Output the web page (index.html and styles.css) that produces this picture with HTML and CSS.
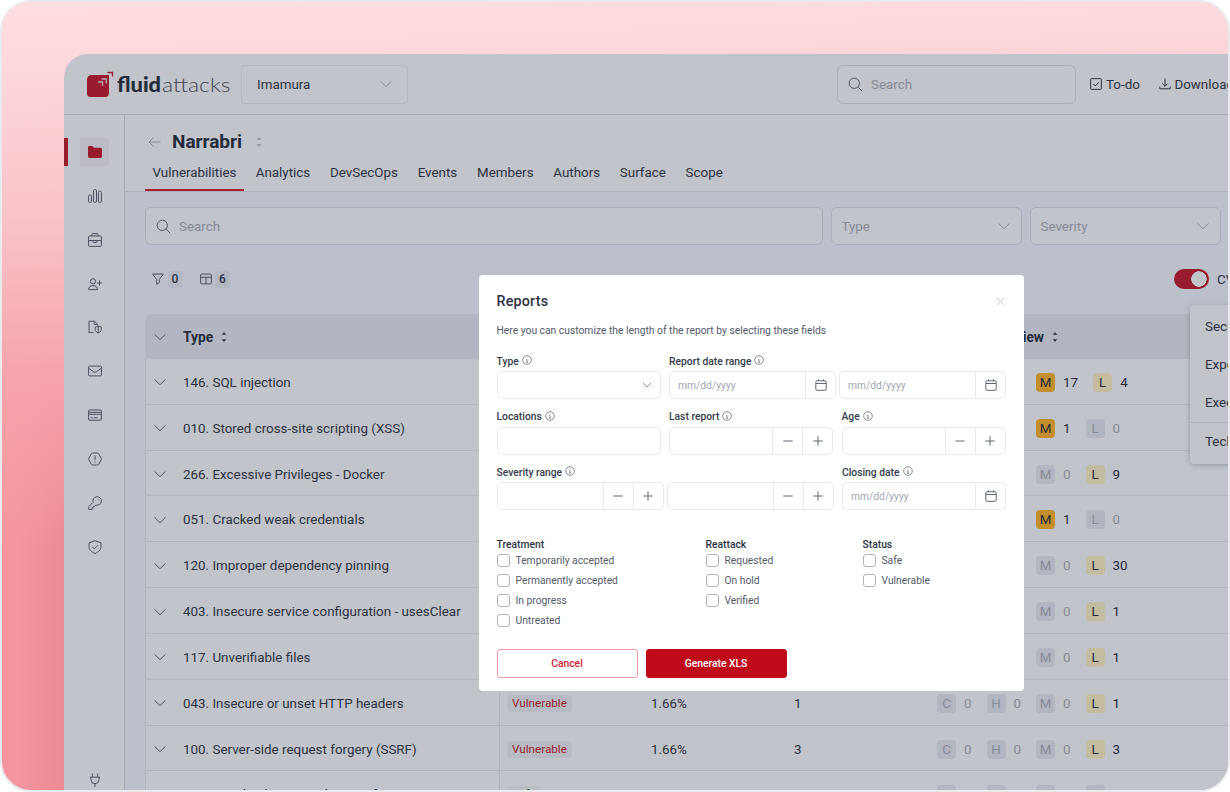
FILE: index.html
```html
<!DOCTYPE html>
<html lang="en">

<head>
    <meta charset="UTF-8">
    <meta name="viewport" content="width=device-width, initial-scale=1.0">
    <title>Fluid Attacks - Reports</title>
    <link rel="stylesheet" href="styles.css">
</head>

<body>
    <svg width="0" height="0" class="sprite">
        <symbol id="chevron" viewBox="0 0 14 14"><path d="M1.5 4.3 7 9.7l5.500-5.400" /></symbol>
        <symbol id="search" viewBox="0 0 16 16"><circle cx="6.700" cy="6.700" r="5.500" /><path d="m10.700 10.700 4.300 4.300" /></symbol>
        <symbol id="sort" viewBox="0 0 8 12"><path class="fill" d="M1.700 3.700 4 1.200 6.300 3.700zM1.700 8.300 4 10.800 6.300 8.300z" /></symbol>
        <symbol id="info" viewBox="0 0 10 10"><circle cx="5" cy="5" r="4.300" /><path d="M4.200 4.500H5v2.700M4 7.200h2M4.700 2.900h.7" /></symbol>
        <symbol id="calendar" viewBox="0 0 12 12"><rect x=".8" y="1.800" width="10.400" height="9.500" rx="1.300" /><path d="M1 4.500h10M3.500.3v1.700M8.500.3v1.700" /></symbol>
        <symbol id="minus" viewBox="0 0 12 12"><path d="M1.300 6h9.400" /></symbol>
        <symbol id="plus" viewBox="0 0 12 12"><path d="M1.300 6h9.400M6 1.300v9.400" /></symbol>
    </svg>

    <div class="frame">
        <div class="app">
            <header class="topbar">
                <svg class="logo" width="146" height="32" viewBox="0 0 146 32">
                    <path class="logo-mark" d="M4.500 8H22v18a4 4 0 0 1-4 4H3.500A3.500 3.500 0 0 1 0 26.500v-14A4.500 4.500 0 0 1 4.500 8z" />
                    <path class="logo-line" d="M11 15h4.500v4M14.500 12h4.800v4.500" />
                    <path class="logo-tip" d="M20.500 5.500h5v4" />
                    <text class="logo-bold" x="30" y="25" textLength="44" lengthAdjust="spacingAndGlyphs">fluid</text>
                    <text class="logo-light" x="75" y="25" textLength="68.500" lengthAdjust="spacingAndGlyphs">attacks</text>
                </svg>
                <div class="select org">Imamura<svg width="14" height="14"><use href="#chevron" /></svg></div>
                <div class="search top-search"><svg width="15" height="15"><use href="#search" /></svg>Search</div>
                <a class="top-link todo"><svg width="12" height="12" viewBox="0 0 12 12"><rect x=".6" y=".6" width="10.800" height="10.800" rx="1" /><path d="m3.300 6 2 2 3.500-3.700" /></svg>To-do</a>
                <a class="top-link download"><svg width="12" height="12" viewBox="0 0 12 12"><path d="M6 .5v7.800M3.300 5.500 6 8.200l2.700-2.700M.8 8.500v2.300h10.400V8.500" /></svg>Downloads</a>
            </header>

            <div class="body">
                <nav class="sidebar">
                    <a class="side-item active"><svg width="14" height="14" viewBox="0 0 14 14"><path class="fill" d="M0 2.300A1.300 1.300 0 0 1 1.300 1H4.500L6 2.800h6.500A1.500 1.500 0 0 1 14 4.300v7.200A1.500 1.500 0 0 1 12.500 13h-11A1.500 1.500 0 0 1 0 11.500z" /></svg></a>
                    <a class="side-item"><svg width="14" height="14" viewBox="0 0 14 14"><rect x=".6" y="6" width="3" height="7.400" rx="1.200" /><rect x="5.500" y=".6" width="3" height="12.800" rx="1.200" /><rect x="10.400" y="2.300" width="3" height="11.100" rx="1.200" /></svg></a>
                    <a class="side-item"><svg width="14" height="14" viewBox="0 0 14 14"><rect x=".6" y="3" width="12.800" height="10.400" rx="1" /><path d="M4 3V1.500q0-.9.9-.9h4.200q.9 0 .9.900V3M.6 7.500h12.800M5 7.500v1.300q0 .7.700.7h2.600q.7 0 .7-.7V7.500" /></svg></a>
                    <a class="side-item"><svg width="14" height="14" viewBox="0 0 14 14"><circle cx="5" cy="4.300" r="2.600" /><path d="M.6 12.600c.3-3 1.700-4 4.400-4s4.100 1 4.400 4zM11.500 3.500v5M9 6h5" /></svg></a>
                    <a class="side-item"><svg width="14" height="14" viewBox="0 0 14 14"><path d="M5.500 12.600H1V1.200h5.500l3 3v1.200M6.200 1.400v3h3M10.300 6l3.100 1.200v2.200c0 1.700-1.200 2.700-3.100 3.600-1.900-.9-3.100-1.900-3.100-3.600V7.200zM10.300 6v7" /></svg></a>
                    <a class="side-item"><svg width="14" height="14" viewBox="0 0 14 14"><rect x=".6" y="2.100" width="12.800" height="9.800" rx="1" /><path d="m1 4.500 4.600 3.300q1.400 1 2.800 0L13 4.500" /></svg></a>
                    <a class="side-item"><svg width="14" height="14" viewBox="0 0 14 14"><rect x=".6" y="2" width="12.800" height="10.200" rx="1" /><path d="M.6 4.300h12.800M.6 6.300h12.800M2.700 9.700h2M6 9.700h3.500" /></svg></a>
                    <a class="side-item"><svg width="14" height="14" viewBox="0 0 14 14"><path d="M4.500 1h5q.8 0 1.200.7L13.200 6.300q.4.700 0 1.400l-2.500 4.600q-.4.700-1.200.7h-5q-.8 0-1.200-.7L.8 7.700q-.4-.7 0-1.400l2.500-4.600Q3.700 1 4.500 1zM7 3.500v4.700M7 9.500v1" /></svg></a>
                    <a class="side-item"><svg width="14" height="14" viewBox="0 0 14 14"><path d="M5.200 6.200A4.200 4.200 0 1 1 8.200 9L7 10.200H5.600v1.500H4.200v1.700H.7v-2.700zM10 3.800h.5" /></svg></a>
                    <a class="side-item"><svg width="14" height="14" viewBox="0 0 14 14"><path d="M7 .7 13 2.900v3.600c0 3.300-2.200 5.300-6 7-3.800-1.700-6-3.700-6-7V2.900zM4.400 6.800l2 2 3.500-3.500" /></svg></a>
                    <a class="side-item bottom"><svg width="14" height="14" viewBox="0 0 14 14"><path d="M4.300.5v3.300M9.700.5v3.300M2 4.200h10M3 4.200v2.500a4 4 0 0 0 8 0V4.200M7 10.700v3.300" /></svg></a>
                </nav>

                <main class="main">
                    <div class="group-header">
                        <div class="group-title">
                            <svg width="13" height="12" viewBox="0 0 13 12"><path d="M12.500 6H1M5.500 1.500 1 6l4.500 4.500" /></svg>
                            <h1>Narrabri</h1>
                            <svg width="8" height="12"><use href="#sort" /></svg>
                        </div>
                        <div class="tabs">
                            <a class="tab active">Vulnerabilities</a>
                            <a class="tab">Analytics</a>
                            <a class="tab">DevSecOps</a>
                            <a class="tab">Events</a>
                            <a class="tab">Members</a>
                            <a class="tab">Authors</a>
                            <a class="tab">Surface</a>
                            <a class="tab">Scope</a>
                        </div>
                    </div>

                    <div class="filters">
                        <div class="search"><svg width="15" height="15"><use href="#search" /></svg>Search</div>
                        <div class="select">Type<svg width="14" height="14"><use href="#chevron" /></svg></div>
                        <div class="select">Severity<svg width="14" height="14"><use href="#chevron" /></svg></div>
                    </div>

                    <div class="toolbar">
                        <svg width="12" height="12" viewBox="0 0 12 12"><path d="M.6 1h10.800L7.400 6.300v3.400l-2.800 1.600v-5z" /></svg>
                        <span class="count">0</span>
                        <svg class="columns" width="12" height="12" viewBox="0 0 12 12"><rect x=".6" y="1.100" width="10.800" height="9.800" rx="1" /><path d="M.6 4.300h10.800M6 4.300v6.600" /></svg>
                        <span class="count">6</span>
                        <span class="toggle"></span>
                        <span class="cvss">CVSS 4.0</span>
                    </div>

                    <div class="table">
                        <div class="row head">
                            <div class="cell first"><svg width="14" height="14"><use href="#chevron" /></svg>Type<svg class="sort" width="8" height="12"><use href="#sort" /></svg></div>
                            <div class="cell">Status</div>
                            <div class="cell">Risk</div>
                            <div class="cell">Open</div>
                            <div class="cell"><span class="overview">Risk Overview</span><svg class="sort" width="8" height="12"><use href="#sort" /></svg></div>
                        </div>
                        <div class="row">
                            <div class="cell first"><svg width="14" height="14"><use href="#chevron" /></svg>146. SQL injection</div>
                            <div class="cell"><span class="tag">Vulnerable</span></div>
                            <div class="cell">1.66%</div>
                            <div class="cell">21</div>
                            <div class="cell levels"><span class="level">C</span><i>0</i><span class="level">H</span><i>0</i><span class="level m">M</span><b>17</b><span class="level l">L</span><b>4</b></div>
                        </div>
                        <div class="row">
                            <div class="cell first"><svg width="14" height="14"><use href="#chevron" /></svg>010. Stored cross-site scripting (XSS)</div>
                            <div class="cell"><span class="tag">Vulnerable</span></div>
                            <div class="cell">1.66%</div>
                            <div class="cell">1</div>
                            <div class="cell levels"><span class="level">C</span><i>0</i><span class="level">H</span><i>0</i><span class="level m">M</span><b>1</b><span class="level">L</span><i>0</i></div>
                        </div>
                        <div class="row">
                            <div class="cell first"><svg width="14" height="14"><use href="#chevron" /></svg>266. Excessive Privileges - Docker</div>
                            <div class="cell"><span class="tag">Vulnerable</span></div>
                            <div class="cell">1.66%</div>
                            <div class="cell">9</div>
                            <div class="cell levels"><span class="level">C</span><i>0</i><span class="level">H</span><i>0</i><span class="level">M</span><i>0</i><span class="level l">L</span><b>9</b></div>
                        </div>
                        <div class="row">
                            <div class="cell first"><svg width="14" height="14"><use href="#chevron" /></svg>051. Cracked weak credentials</div>
                            <div class="cell"><span class="tag">Vulnerable</span></div>
                            <div class="cell">1.66%</div>
                            <div class="cell">1</div>
                            <div class="cell levels"><span class="level">C</span><i>0</i><span class="level">H</span><i>0</i><span class="level m">M</span><b>1</b><span class="level">L</span><i>0</i></div>
                        </div>
                        <div class="row">
                            <div class="cell first"><svg width="14" height="14"><use href="#chevron" /></svg>120. Improper dependency pinning</div>
                            <div class="cell"><span class="tag">Vulnerable</span></div>
                            <div class="cell">1.66%</div>
                            <div class="cell">30</div>
                            <div class="cell levels"><span class="level">C</span><i>0</i><span class="level">H</span><i>0</i><span class="level">M</span><i>0</i><span class="level l">L</span><b>30</b></div>
                        </div>
                        <div class="row">
                            <div class="cell first"><svg width="14" height="14"><use href="#chevron" /></svg>403. Insecure service configuration - usesClear</div>
                            <div class="cell"><span class="tag">Vulnerable</span></div>
                            <div class="cell">1.66%</div>
                            <div class="cell">1</div>
                            <div class="cell levels"><span class="level">C</span><i>0</i><span class="level">H</span><i>0</i><span class="level">M</span><i>0</i><span class="level l">L</span><b>1</b></div>
                        </div>
                        <div class="row">
                            <div class="cell first"><svg width="14" height="14"><use href="#chevron" /></svg>117. Unverifiable files</div>
                            <div class="cell"><span class="tag">Vulnerable</span></div>
                            <div class="cell">1.66%</div>
                            <div class="cell">1</div>
                            <div class="cell levels"><span class="level">C</span><i>0</i><span class="level">H</span><i>0</i><span class="level">M</span><i>0</i><span class="level l">L</span><b>1</b></div>
                        </div>
                        <div class="row">
                            <div class="cell first"><svg width="14" height="14"><use href="#chevron" /></svg>043. Insecure or unset HTTP headers</div>
                            <div class="cell"><span class="tag">Vulnerable</span></div>
                            <div class="cell">1.66%</div>
                            <div class="cell">1</div>
                            <div class="cell levels"><span class="level">C</span><i>0</i><span class="level">H</span><i>0</i><span class="level">M</span><i>0</i><span class="level l">L</span><b>1</b></div>
                        </div>
                        <div class="row">
                            <div class="cell first"><svg width="14" height="14"><use href="#chevron" /></svg>100. Server-side request forgery (SSRF)</div>
                            <div class="cell"><span class="tag">Vulnerable</span></div>
                            <div class="cell">1.66%</div>
                            <div class="cell">3</div>
                            <div class="cell levels"><span class="level">C</span><i>0</i><span class="level">H</span><i>0</i><span class="level">M</span><i>0</i><span class="level l">L</span><b>3</b></div>
                        </div>
                        <div class="row">
                            <div class="cell first"><svg width="14" height="14"><use href="#chevron" /></svg>331. Supply Chain Attack - Terraform</div>
                            <div class="cell"><span class="tag safe">Safe</span></div>
                            <div class="cell">0.0%</div>
                            <div class="cell">0</div>
                            <div class="cell levels"><span class="level">C</span><i>0</i><span class="level">H</span><i>0</i><span class="level">M</span><i>0</i><span class="level">L</span><i>0</i></div>
                        </div>
                    </div>
                </main>
            </div>
        </div>

        <div class="menu">
            <a>Security Tests</a>
            <a>Export</a>
            <a>Executive</a>
            <a class="last">Technical</a>
        </div>

        <div class="modal">
            <div class="modal-head">
                <h2>Reports</h2>
                <svg width="9" height="9" viewBox="0 0 9 9"><path d="m1 1 7 7M8 1 1 8" /></svg>
            </div>
            <p>Here you can customize the length of the report by selecting these fields</p>

            <div class="form-row">
                <div class="field">
                    <label>Type <svg width="10" height="10"><use href="#info" /></svg></label>
                    <div class="input"><span></span><svg class="caret" width="10" height="10"><use href="#chevron" /></svg></div>
                </div>
                <div class="field">
                    <label>Report date range <svg width="10" height="10"><use href="#info" /></svg></label>
                    <div class="pair">
                        <div class="input wide"><span>mm/dd/yyyy</span><button><svg width="12" height="12"><use href="#calendar" /></svg></button></div>
                        <div class="input wide"><span>mm/dd/yyyy</span><button><svg width="12" height="12"><use href="#calendar" /></svg></button></div>
                    </div>
                </div>
            </div>
            <div class="form-row">
                <div class="field">
                    <label>Locations <svg width="10" height="10"><use href="#info" /></svg></label>
                    <div class="input"></div>
                </div>
                <div class="field">
                    <label>Last report <svg width="10" height="10"><use href="#info" /></svg></label>
                    <div class="input"><span></span><button><svg width="12" height="12"><use href="#minus" /></svg></button><button><svg width="12" height="12"><use href="#plus" /></svg></button></div>
                </div>
                <div class="field">
                    <label>Age <svg width="10" height="10"><use href="#info" /></svg></label>
                    <div class="input"><span></span><button><svg width="12" height="12"><use href="#minus" /></svg></button><button><svg width="12" height="12"><use href="#plus" /></svg></button></div>
                </div>
            </div>
            <div class="form-row">
                <div class="field">
                    <label>Severity range <svg width="10" height="10"><use href="#info" /></svg></label>
                    <div class="pair">
                        <div class="input wide"><span></span><button><svg width="12" height="12"><use href="#minus" /></svg></button><button><svg width="12" height="12"><use href="#plus" /></svg></button></div>
                        <div class="input wide"><span></span><button><svg width="12" height="12"><use href="#minus" /></svg></button><button><svg width="12" height="12"><use href="#plus" /></svg></button></div>
                    </div>
                </div>
                <div class="field">
                    <label>Closing date <svg width="10" height="10"><use href="#info" /></svg></label>
                    <div class="input"><span>mm/dd/yyyy</span><button><svg width="12" height="12"><use href="#calendar" /></svg></button></div>
                </div>
            </div>

            <div class="checks">
                <div class="check-group">
                    <h3>Treatment</h3>
                    <div class="check"><i></i>Temporarily accepted</div>
                    <div class="check"><i></i>Permanently accepted</div>
                    <div class="check"><i></i>In progress</div>
                    <div class="check"><i></i>Untreated</div>
                </div>
                <div class="check-group">
                    <h3>Reattack</h3>
                    <div class="check"><i></i>Requested</div>
                    <div class="check"><i></i>On hold</div>
                    <div class="check"><i></i>Verified</div>
                </div>
                <div class="check-group">
                    <h3>Status</h3>
                    <div class="check"><i></i>Safe</div>
                    <div class="check"><i></i>Vulnerable</div>
                </div>
            </div>

            <div class="buttons">
                <button class="btn">Cancel</button>
                <button class="btn primary">Generate XLS</button>
            </div>
        </div>
    </div>
</body>

</html>
```

FILE: styles.css
```css
* {
    box-sizing: border-box;
}

body {
    margin: 0;
    background: #fff;
    font-family: Roboto, "Liberation Sans", sans-serif;
    font-size: 13.400px;
    color: #2b3242;
    white-space: nowrap;
}

svg {
    flex-shrink: 0;
    fill: none;
    stroke: currentColor;
    stroke-width: 1;
}

.fill {
    fill: currentColor;
    stroke: none;
}

.sprite {
    position: absolute;
}

.frame {
    position: relative;
    width: 1230px;
    height: 792px;
    padding: 52px 0 0 62px;
    overflow: hidden;
    border: 2px solid #e9eaee;
    border-radius: 31px;
    background:
        linear-gradient(178deg, #ffdee1 0, #fdd7db 8%, #f9c3c9 26%, #f7a5ad 44%, rgba(245, 147, 157, 0) 66%),
        linear-gradient(90deg, #f6959e 15px, #ed8a94 62px);
}

.app {
    height: 738px;
    overflow: hidden;
    border-radius: 24px 0 0 0;
    background: #c1c4ca;
}

/* top bar */
.topbar {
    display: flex;
    align-items: center;
    height: 61px;
    padding-left: 23px;
    border-bottom: 1px solid #a5a9b3;
}

.topbar > * {
    flex-shrink: 0;
}

.logo {
    margin-right: 8px;
    margin-top: -3px;
    stroke: none;
}

.logo-mark {
    fill: #981c2d;
}

.logo-line {
    fill: none;
    stroke: #c1a5ad;
    stroke-width: 1.3;
}

.logo-tip {
    fill: none;
    stroke: #981c2d;
    stroke-width: 1.3;
}

.logo-bold,
.logo-light {
    font-family: Lato, sans-serif;
    font-size: 20px;
    font-weight: 900;
    fill: #242c3c;
}

.logo-light {
    font-weight: 300;
    fill: #3c4352;
}

.select,
.search {
    display: flex;
    align-items: center;
    height: 38px;
    border: 1px solid #a9adb9;
    border-radius: 6px;
    background: #c1c4ca;
    color: #858a96;
}

.select {
    justify-content: space-between;
    width: 191px;
    padding: 0 10px 0 10px;
}

.search {
    gap: 8px;
    padding-left: 10px;
}

.search svg {
    color: #4a5060;
}

.org {
    width: 167px;
    height: 39px;
    padding: 0 14px 0 15px;
    border-color: #b4b8c0;
    border-radius: 4px;
    color: #2b3242;
}

.org svg {
    color: #858a96;
}

.top-search {
    width: 239px;
    height: 39px;
    margin: 0 14px 0 429px;
}

.top-link {
    display: flex;
    align-items: center;
    gap: 4px;
    margin-right: 19px;
}

.top-link.download {
    gap: 3.500px;
}

.body {
    display: flex;
    height: 679px;
}

/* sidebar */
.sidebar {
    display: flex;
    flex-direction: column;
    gap: 15.850px;
    width: 61px;
    padding: 23px 0 0;
    border-right: 1px solid #a5a9b3;
    color: #4a5060;
}

.side-item {
    display: flex;
    flex-shrink: 0;
    align-items: center;
    justify-content: center;
    height: 28px;
    padding-left: 1px;
}

.side-item.active {
    width: 45px;
    padding-left: 12px;
    border-left: 4px solid #981c2d;
    border-radius: 0 4px 4px 0;
    background: linear-gradient(#babbc5, #babbc5) right / 29px 100% no-repeat;
    color: #981c2d;
}

.side-item.bottom {
    margin-top: auto;
}

/* main */
.main {
    flex: 1;
    min-width: 0;
    background: #bcc0cb;
}

.group-header {
    height: 77px;
    padding: 15px 0 0 20px;
    border-bottom: 1px solid #adb1bb;
    background: #c1c4ca;
}

.group-title {
    display: flex;
    align-items: center;
    height: 24px;
    padding-left: 3px;
    color: #858a96;
}

.group-title h1 {
    margin: 0 13px 0 11px;
    font-size: 19px;
    font-weight: 700;
    line-height: 22px;
    color: #242c3c;
}

.tabs {
    display: flex;
    gap: 3.700px;
    margin-top: 6px;
}

.tab {
    height: 31px;
    padding: 4px 8px 0;
    line-height: 18px;
}

.tab.active {
    width: 99px;
    padding: 4px 0 0 7.500px;
    border-bottom: 2px solid #a32334;
}

.filters {
    display: flex;
    gap: 8px;
    padding: 15px 7.500px 0 20px;
}

.filters .search {
    flex: 1;
}

.toolbar {
    display: flex;
    align-items: center;
    width: 1147px;
    height: 69px;
    padding: 0 0 1px 27px;
}

.toolbar svg {
    color: #4a5060;
}

.toolbar .columns {
    margin-left: 17px;
}

.count {
    width: 15px;
    margin-left: 3.500px;
    border-radius: 4px;
    background: #b4b8c2;
    font-size: 12px;
    font-weight: 500;
    line-height: 17px;
    text-align: center;
}

.toggle {
    width: 35px;
    height: 20px;
    margin: 0 8px 0 auto;
    border: 2px solid #981c2d;
    border-radius: 10px;
    background: radial-gradient(circle at 23px 8px, #c1c4ca 7.500px, #981c2d 8px);
}

.cvss {
    width: 55px;
}

/* vulnerabilities table */
.table {
    width: 1100px;
    margin-left: 20px;
}

.row {
    display: grid;
    grid-template-columns: 355px 144px 143px 143px 1fr;
    height: 45.830px;
    border-bottom: 1px solid #b0b4bd;
    background: #c1c4ca;
}

.row.head {
    height: 45px;
    border: 0;
    border-radius: 8px 8px 0 0;
    background: #b2b6c1;
    font-size: 13.800px;
    font-weight: 700;
    color: #242c3c;
}

.cell {
    display: flex;
    align-items: center;
    padding: 2px 0 0 7px;
}

.head .cell {
    padding-top: 0;
}

.cell.first {
    padding-left: 7px;
    border-left: 1px solid #b0b4bd;
    border-right: 1px solid #b0b4bd;
}

.head .cell.first {
    border-color: transparent;
}

.cell.first svg:first-child {
    margin-right: 16px;
    color: #4a5060;
}

.sort {
    margin-left: 7px;
}

.overview {
    display: flex;
    justify-content: flex-end;
    width: 107px;
}

.tag {
    padding: 0 5px;
    border-radius: 4px;
    background: #b9bbc4;
    font-size: 11.700px;
    line-height: 17px;
    color: #981c2d;
}

.tag.safe {
    background: #b9bdc4;
    color: #2b5a48;
}

.level {
    width: 19px;
    height: 19px;
    border-radius: 4px;
    background: #b2b6c1;
    line-height: 19px;
    text-align: center;
    color: #858a96;
}

.level.m {
    background: #c38f2d;
    color: #242c3c;
}

.level.l {
    background: #c3bca0;
    color: #242c3c;
}

.levels i,
.levels b {
    margin: 0 15px 0 8px;
    font-style: normal;
    font-weight: 400;
    color: #858a96;
}

.levels b {
    color: #242c3c;
}

/* report menu */
.menu {
    position: absolute;
    top: 303px;
    left: 1188px;
    width: 180px;
    border-radius: 4px;
    background: #c1c4ca;
    box-shadow: 0 1px 5px rgba(80, 86, 110, .45);
}

.menu a {
    display: block;
    padding-left: 15px;
    line-height: 38px;
}

.menu a:first-child {
    padding-top: 3px;
}

.menu .last {
    padding-bottom: 3px;
    border-top: 1px solid #adb1bb;
}

/* reports modal */
.modal {
    position: absolute;
    top: 273px;
    left: 477px;
    width: 545px;
    height: 416px;
    padding: 16px 17.500px 0;
    border-radius: 4px;
    background: #fff;
    font-size: 10.300px;
    color: #535a69;
}

.modal-head {
    display: flex;
    align-items: center;
    justify-content: space-between;
    height: 20px;
    padding-right: 1px;
}

.modal-head svg {
    margin-right: 1px;
    color: #c9ccd3;
}

.modal h2 {
    margin: 0;
    font-size: 14.300px;
    font-weight: 500;
    letter-spacing: .2px;
    color: #2b3242;
}

.modal p {
    margin: 13px 0 16px;
    line-height: 14px;
}

.form-row {
    display: flex;
    gap: 8.500px;
    height: 55.600px;
}

.field label {
    display: flex;
    align-items: center;
    gap: 3px;
    height: 14px;
    margin-bottom: 3px;
    font-weight: 500;
    color: #353c4b;
}

.field label svg {
    margin-bottom: 2px;
    color: #6b7180;
    stroke-width: .8;
}

.pair {
    display: flex;
    gap: 3px;
}

.input {
    display: flex;
    align-items: center;
    width: 164px;
    height: 28px;
    border: 1px solid #e8eaed;
    border-radius: 5px;
    color: #a3a8b3;
}

.input.wide {
    width: 167px;
}

.input span {
    flex: 1;
    padding-left: 8px;
}

.input button {
    display: flex;
    align-items: center;
    justify-content: center;
    width: 30px;
    height: 26px;
    padding: 0;
    border: 0;
    border-left: 1px solid #e8eaed;
    background: none;
    color: #5f6675;
}

.input .caret {
    margin-right: 8px;
    color: #8d93a0;
    stroke-width: 1.400;
}

.checks {
    display: flex;
    height: 110px;
    margin-top: 18px;
}

.check-group:nth-child(1) {
    width: 209px;
}

.check-group:nth-child(2) {
    width: 157px;
}

.checks h3 {
    margin: 0 0 -.800px;
    font-size: 10.300px;
    font-weight: 500;
    line-height: 12px;
    color: #2b3242;
}

.check {
    display: flex;
    align-items: center;
    gap: 6px;
    height: 20.200px;
}

.check i {
    width: 13px;
    height: 13px;
    border: 1px solid #aeb3be;
    border-radius: 3px;
}

.buttons {
    display: flex;
    gap: 8px;
}

.btn {
    width: 141px;
    height: 29px;
    border: 1px solid #f59aa3;
    border-radius: 3px;
    background: #fff;
    font-family: inherit;
    font-size: 10.300px;
    font-weight: 500;
    color: #cf2233;
}

.btn.primary {
    border-color: #bf0b1a;
    background: #bf0b1a;
    color: #fff;
}
```
